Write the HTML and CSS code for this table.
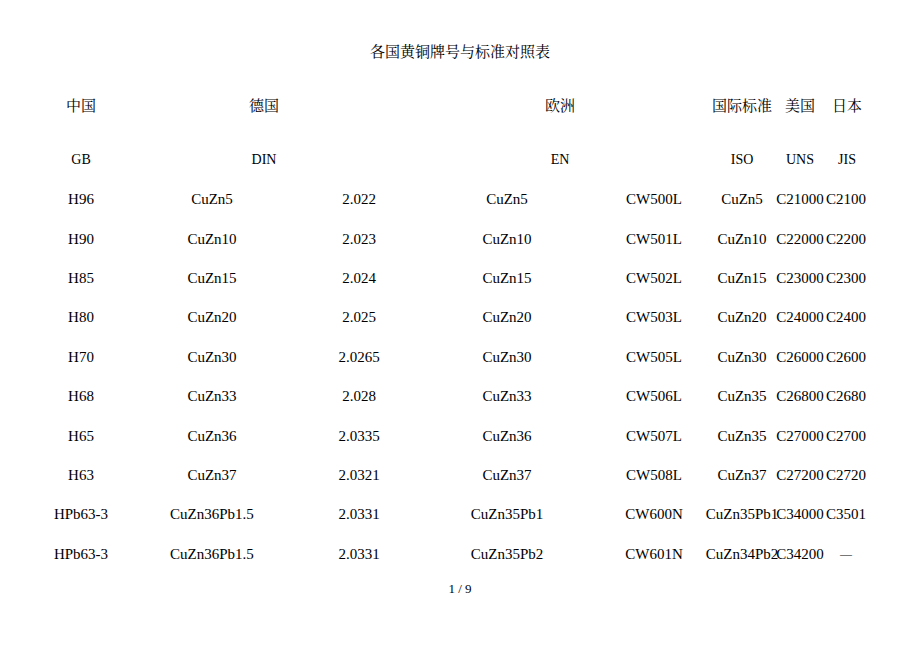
FILE: index.html
```html
<!DOCTYPE html>
<html lang="zh-CN">
<head>
<meta charset="utf-8">
<title>各国黄铜牌号与标准对照表</title>
<link rel="stylesheet" href="styles.css">
</head>
<body>
<div class="page">
  <h1 class="title">各国黄铜牌号与标准对照表</h1>
  <div class="head head-cn">
    <span>中国</span><span>德国</span><span>欧洲</span><span>国际标准</span><span>美国</span><span>日本</span>
  </div>
  <div class="head head-std">
    <span>GB</span><span>DIN</span><span>EN</span><span>ISO</span><span>UNS</span><span>JIS</span>
  </div>
  <div class="table">
    <span>H96</span><span>CuZn5</span><span>2.022</span><span>CuZn5</span><span>CW500L</span><span>CuZn5</span><span>C21000</span><span>C2100</span>
    <span>H90</span><span>CuZn10</span><span>2.023</span><span>CuZn10</span><span>CW501L</span><span>CuZn10</span><span>C22000</span><span>C2200</span>
    <span>H85</span><span>CuZn15</span><span>2.024</span><span>CuZn15</span><span>CW502L</span><span>CuZn15</span><span>C23000</span><span>C2300</span>
    <span>H80</span><span>CuZn20</span><span>2.025</span><span>CuZn20</span><span>CW503L</span><span>CuZn20</span><span>C24000</span><span>C2400</span>
    <span>H70</span><span>CuZn30</span><span>2.0265</span><span>CuZn30</span><span>CW505L</span><span>CuZn30</span><span>C26000</span><span>C2600</span>
    <span>H68</span><span>CuZn33</span><span>2.028</span><span>CuZn33</span><span>CW506L</span><span>CuZn35</span><span>C26800</span><span>C2680</span>
    <span>H65</span><span>CuZn36</span><span>2.0335</span><span>CuZn36</span><span>CW507L</span><span>CuZn35</span><span>C27000</span><span>C2700</span>
    <span>H63</span><span>CuZn37</span><span>2.0321</span><span>CuZn37</span><span>CW508L</span><span>CuZn37</span><span>C27200</span><span>C2720</span>
    <span>HPb63-3</span><span>CuZn36Pb1.5</span><span>2.0331</span><span>CuZn35Pb1</span><span>CW600N</span><span>CuZn35Pb1</span><span>C34000</span><span>C3501</span>
    <span>HPb63-3</span><span>CuZn36Pb1.5</span><span>2.0331</span><span>CuZn35Pb2</span><span>CW601N</span><span>CuZn34Pb2</span><span>C34200</span><span class="dash">—</span>
  </div>
  <div class="footer">1 / 9</div>
</div>
</body>
</html>
```
FILE: styles.css
```css
html, body {
  margin: 0;
  padding: 0;
  background: #ffffff;
}
body {
  width: 920px;
  height: 651px;
  overflow: hidden;
  color: #000000;
  font-family: "Liberation Serif", "Noto Serif CJK SC", "Noto Sans CJK SC", serif;
  font-size: 15px;
}
.page {
  padding-top: 42px;
}
.title {
  margin: 0;
  font-size: 15px;
  font-weight: normal;
  line-height: 20px;
  text-align: center;
}
.head {
  display: grid;
  justify-items: center;
  align-items: center;
  height: 40px;
  padding-left: 40px;
  white-space: nowrap;
  grid-template-columns: 82px 284px 308px 56px 60px 34px;
}
.head-cn {
  margin-top: 22px;
}
.head-std {
  margin-top: 16px;
  font-size: 14px;
}
.table {
  display: grid;
  padding-left: 40px;
  grid-template-columns: 82px 180px 114px 182px 112px 64px 52px 40px;
  grid-auto-rows: 39.4px;
  justify-items: center;
  align-items: center;
  white-space: nowrap;
}
.dash {
  font-size: 12px;
}
.footer {
  margin-top: 5px;
  line-height: 20px;
  text-align: center;
  font-size: 13px;
}
```
